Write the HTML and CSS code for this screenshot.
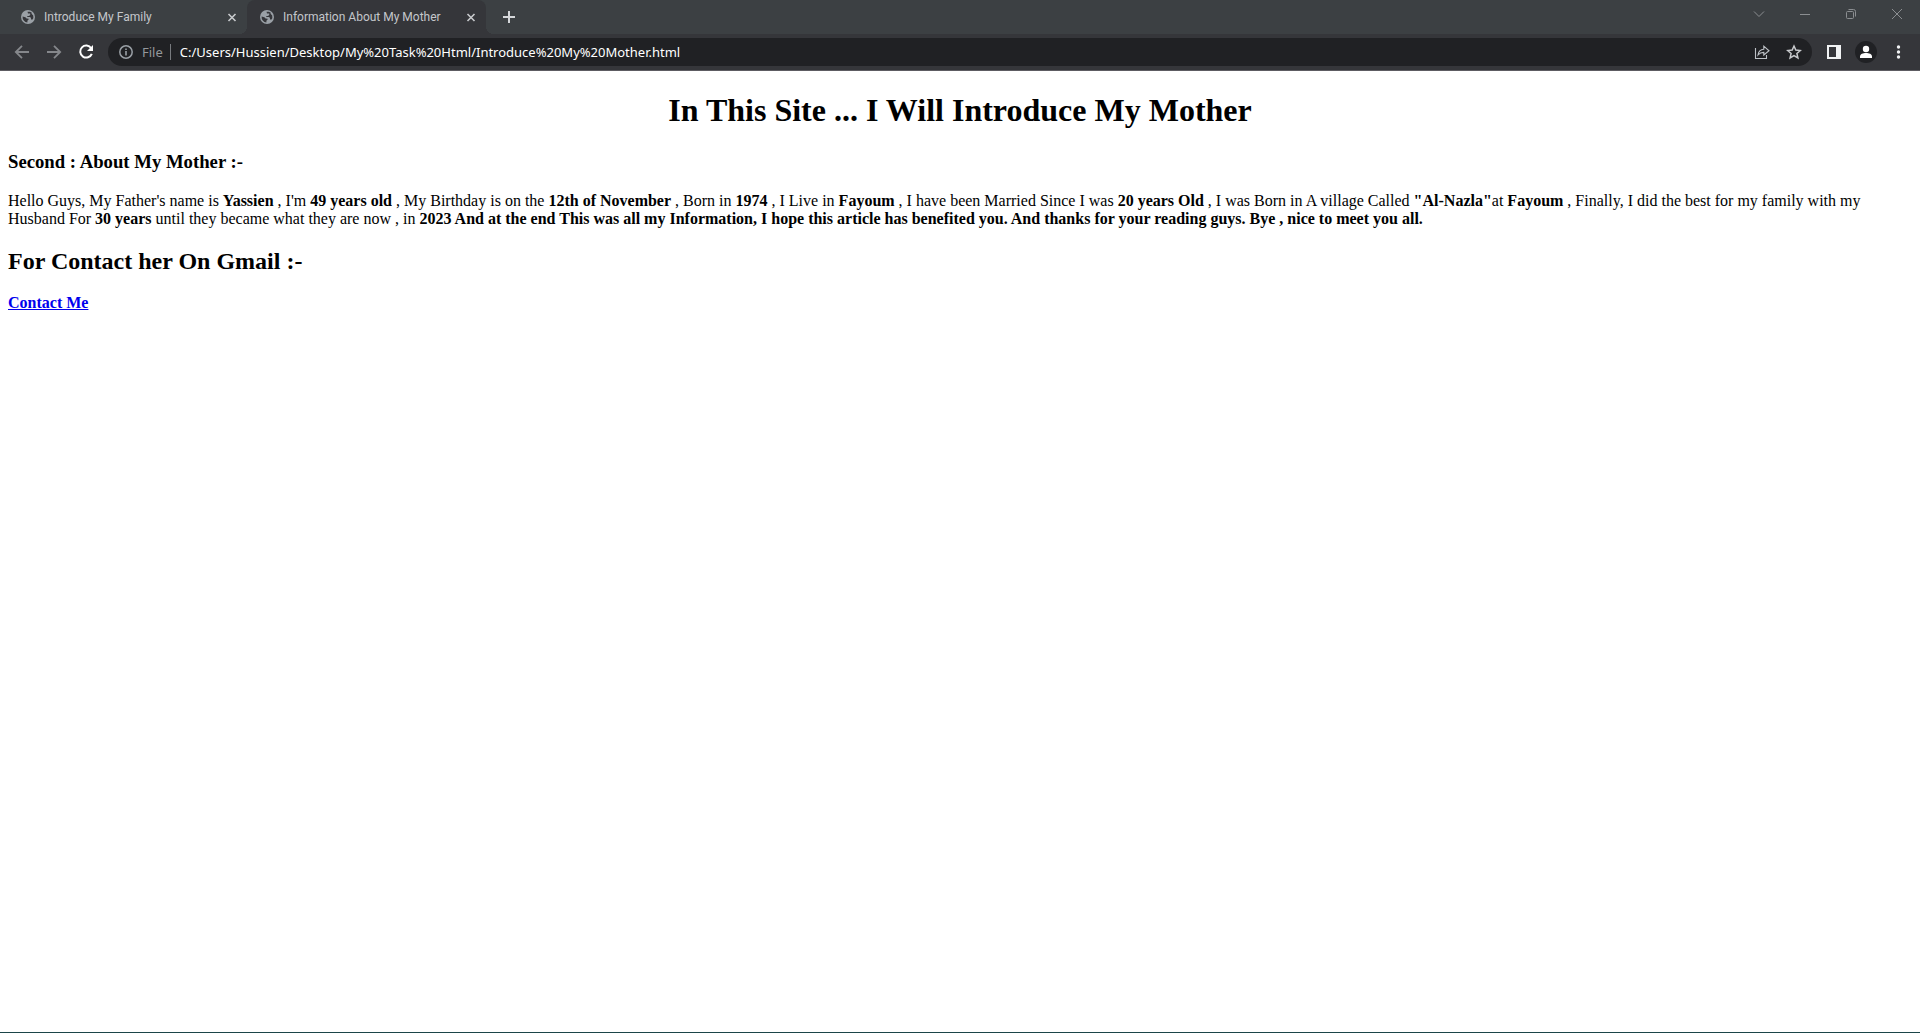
FILE: index.html
```html
<!DOCTYPE html>
<html lang="en">
<head>
<meta charset="utf-8">
<title>Information About My Mother</title>
<link rel="stylesheet" href="styles.css">
</head>
<body>
<svg class="defs" aria-hidden="true">
  <symbol id="globe" viewBox="0 0 14 14">
    <circle cx="7" cy="7" r="7" fill="#9aa0a6"/>
    <path d="M6.5 1.8 7 3.6H9.2V5L8 6H6.3V7H9.2L10 8.2V9.6H11.6A5.4 5.4 0 0 0 12.2 5.4L10.6 3.8V2.6L8.8 1.8ZM1.6 6.4A5.5 5.5 0 0 0 6.4 12.4V10.8L7.6 9.6V8.8L5.6 8.6 4.4 7.2Z" fill="#35363a"/>
  </symbol>
  <symbol id="cross" viewBox="0 0 16 16">
    <path d="M4.500 5 11.500 12M11.500 5 4.500 12" stroke="#c8cacd" stroke-width="1.6" fill="none"/>
  </symbol>
</svg>
<header class="browser">
  <div class="tabstrip">
    <div class="tab">
      <svg class="favicon"><use href="#globe"/></svg>
      <span class="tab-title">Introduce My Family</span>
      <button class="tab-close" aria-label="Close tab"><svg width="16" height="16"><use href="#cross"/></svg></button>
    </div>
    <div class="tab tab-active">
      <svg class="favicon"><use href="#globe"/></svg>
      <span class="tab-title">Information About My Mother</span>
      <button class="tab-close" aria-label="Close tab"><svg width="16" height="16"><use href="#cross"/></svg></button>
    </div>
    <button class="new-tab" aria-label="New tab"><svg width="12" height="12"><path d="M6 0V12M0 6H12" stroke="#d5d7da" stroke-width="2"/></svg></button>
    <div class="window-controls">
      <button aria-label="Search tabs"><svg width="12" height="12" fill="none" stroke="#8b8e91"><path d="M1 3.5 6 8.5 11 3.5"/></svg></button>
      <button aria-label="Minimize"><svg width="12" height="12"><path d="M1 6.5H11" stroke="#8b8e91"/></svg></button>
      <button aria-label="Restore"><svg width="12" height="12" fill="none" stroke="#8b8e91"><rect x="1.5" y="3.5" width="7" height="7" rx="1"/><path d="M3.5 1.5H8.5A2 2 0 0 1 10.500 3.500V8.500"/></svg></button>
      <button aria-label="Close"><svg width="12" height="12" fill="none" stroke="#8b8e91"><path d="M1 1 11 11M11 1 1 11"/></svg></button>
    </div>
  </div>
  <div class="toolbar">
    <button class="tool" aria-label="Back"><svg width="16" height="16" fill="none" stroke="#85878b" stroke-width="1.8"><path d="M15 8H2.500M8 1.800 1.800 8 8 14.200"/></svg></button>
    <button class="tool" aria-label="Forward"><svg width="16" height="16" fill="none" stroke="#85878b" stroke-width="1.8"><path d="M1 8H13.500M8 1.800 14.200 8 8 14.200"/></svg></button>
    <button class="tool" aria-label="Reload"><svg width="16" height="16" viewBox="0 0 16 16"><path d="M13.200 4.200A6 6 0 1 0 13.800 9.800" fill="none" stroke="#fff" stroke-width="2"/><path d="M15 1V7H9Z" fill="#fff"/></svg></button>
    <div class="omnibox">
      <button class="site-info" aria-label="Site information"><svg width="14" height="14"><circle cx="7" cy="7" r="6.2" fill="none" stroke="#9aa0a6" stroke-width="1.5"/><path d="M6.200 6H7.800V10.500H6.200ZM6.200 3.500H7.800V5H6.200Z" fill="#9aa0a6"/></svg><span>File</span></button>
      <input class="url" type="text" aria-label="Address" value="C:/Users/Hussien/Desktop/My%20Task%20Html/Introduce%20My%20Mother.html">
      <button class="tool" aria-label="Share"><svg width="16" height="16" fill="none" stroke="#bdc1c6" stroke-width="1.1"><path d="M1.500 4V14.500H12.500V11M4 11C4.500 7.500 6.500 5.500 9.800 5.300V2.200L15 6.800 9.800 11V8.400C7.400 8.400 5.500 9.200 4 11Z"/></svg></button>
      <button class="tool" aria-label="Bookmark"><svg width="16" height="16" fill="none" stroke="#c8cacd" stroke-width="1.5"><path d="M8 2 9.800 6.100 14.300 6.500 10.900 9.500 11.900 13.900 8 11.600 4.100 13.900 5.100 9.500 1.700 6.500 6.200 6.100Z"/></svg></button>
    </div>
    <button class="tool" aria-label="Side panel"><svg width="14" height="14" viewBox="0 0 14 14"><path d="M0 0H14V14H0ZM2 2V12H9V2Z" fill="#f1f3f4" fill-rule="evenodd"/></svg></button>
    <button class="tool" aria-label="Profile"><svg width="22" height="22"><circle cx="11" cy="11" r="11" fill="#202124"/><circle cx="11" cy="8" r="3.200" fill="#fff"/><path d="M5 17V15.500C5 13 8 12 11 12S17 13 17 15.500V17Z" fill="#fff"/></svg></button>
    <button class="tool" aria-label="Menu"><svg width="16" height="16" fill="#f1f3f4"><circle cx="8.500" cy="3" r="1.700"/><circle cx="8.500" cy="8" r="1.700"/><circle cx="8.500" cy="13" r="1.700"/></svg></button>
  </div>
</header>
<main class="page">
  <h1>In This Site ... I Will Introduce My Mother</h1>
  <h3>Second : About My Mother :-</h3>
  <p>Hello Guys, My Father's name is <b>Yassien</b> , I'm <b>49 years old</b> , My Birthday is on the <b>12th of November</b> , Born in <b>1974</b> , I Live in <b>Fayoum</b> , I have been Married Since I was <b>20 years Old</b> , I was Born in A village Called <b>"Al-Nazla"</b>at <b>Fayoum</b> , Finally, I did the best for my family with my Husband For <b>30 years</b> until they became what they are now , in <b>2023 And at the end This was all my Information, I hope this article has benefited you. And thanks for your reading guys. Bye , nice to meet you all.</b></p>
  <h2>For Contact her On Gmail :-</h2>
  <a class="contact" href="#">Contact Me</a>
</main>
</body>
</html>
```
FILE: styles.css
```css
* {
  box-sizing: border-box;
}

body {
  margin: 0;
  min-height: 100vh;
  display: flex;
  flex-direction: column;
  background: #fff;
  border-bottom: 1px solid #1b4549;
}

.defs {
  display: none;
}

button {
  display: flex;
  align-items: center;
  justify-content: center;
  flex: none;
  padding: 0;
  border: 0;
  background: none;
  color: inherit;
  font: inherit;
}

svg {
  display: block;
  flex: none;
}

.browser {
  background: #35363a;
  border-bottom: 1px solid #5d5c62;
  font-family: "Noto Sans", "Open Sans", sans-serif;
}

.tabstrip {
  display: flex;
  height: 34px;
  padding-left: 8px;
  background: #3c4043;
}

.tab {
  position: relative;
  display: flex;
  align-items: center;
  width: 239px;
  height: 34px;
  padding: 0 7px 0 13px;
  color: #c4c7cb;
  font-family: Roboto, sans-serif;
  font-size: 12px;
}

.tab-active {
  background: #35363a;
  border-radius: 8px 8px 0 0;
}

.tab-active::before,
.tab-active::after {
  content: "";
  position: absolute;
  bottom: 0;
  width: 8px;
  height: 8px;
}

.tab-active::before {
  right: 100%;
  background: radial-gradient(circle at 0 0, transparent 8px, #35363a 8px);
}

.tab-active::after {
  left: 100%;
  background: radial-gradient(circle at 100% 0, transparent 8px, #35363a 8px);
}

.favicon {
  width: 14px;
  height: 14px;
  margin-right: 9px;
}

.tab-title {
  flex: 1;
  white-space: nowrap;
}

.new-tab {
  width: 28px;
  margin-left: 9px;
}

.window-controls {
  display: flex;
  height: 28px;
  margin-left: auto;
}

.window-controls button {
  width: 46px;
}

.toolbar {
  display: flex;
  align-items: center;
  height: 36px;
  padding: 0 6px;
}

.tool {
  width: 32px;
  height: 28px;
}

.omnibox {
  display: flex;
  align-items: center;
  flex: 1;
  height: 28px;
  margin: 0 6px;
  padding: 0 2px 0 11px;
  border-radius: 14px;
  background: #202124;
  font-size: 13px;
}

.site-info {
  gap: 9px;
  padding-right: 7px;
  border-right: 1px solid #777a7e;
  height: 16px;
  color: #94989c;
}

.url {
  flex: 1;
  min-width: 0;
  padding: 0 0 0 9px;
  border: 0;
  outline: 0;
  background: none;
  color: #fff;
  font: inherit;
}

.page {
  display: flow-root;
  flex: 1;
  padding: 0 8px;
  font-family: "Liberation Serif", "Times New Roman", serif;
  font-size: 16px;
}

.page h1 {
  text-align: center;
}

.contact {
  color: #00e;
  font-weight: bold;
}
```
